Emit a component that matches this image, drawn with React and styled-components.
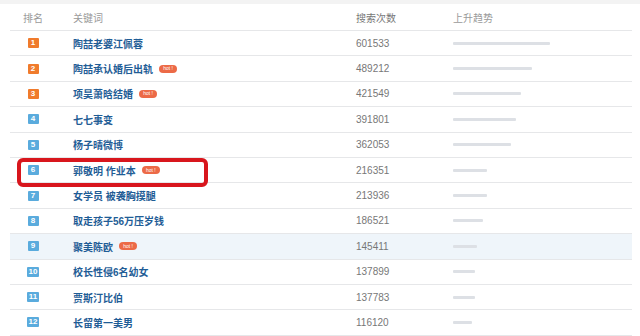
import * as React from 'react';
import styled, { createGlobalStyle } from 'styled-components';

const rows = [
  { rank: 1, word: '陶喆老婆江佩蓉', count: 601533, trend: 97 },
  { rank: 2, word: '陶喆承认婚后出轨', count: 489212, trend: 79, hot: true },
  { rank: 3, word: '项昊萧晗结婚', count: 421549, trend: 68, hot: true },
  { rank: 4, word: '七七事变', count: 391801, trend: 63 },
  { rank: 5, word: '杨子晴微博', count: 362053, trend: 58 },
  { rank: 6, word: '郭敬明 作业本', count: 216351, trend: 34, hot: true, marked: true },
  { rank: 7, word: '女学员 被袭胸摸腿', count: 213936, trend: 34 },
  { rank: 8, word: '取走孩子56万压岁钱', count: 186521, trend: 30 },
  { rank: 9, word: '聚美陈欧', count: 145411, trend: 24, hot: true, active: true },
  { rank: 10, word: '校长性侵6名幼女', count: 137899, trend: 22 },
  { rank: 11, word: '贾斯汀比伯', count: 137783, trend: 22 },
  { rank: 12, word: '长留第一美男', count: 116120, trend: 19 },
];

function App() {
  return (
    <>
      <GlobalStyle />
      <Page>
        <TopStrip />
        <Table>
          <HeadRow>
            <RankCell>排名</RankCell>
            <WordCell>关键词</WordCell>
            <CountCell>搜索次数</CountCell>
            <TrendCell>上升趋势</TrendCell>
          </HeadRow>
          {rows.map((item) => (
            <Row key={item.rank} $active={item.active}>
              <RankCell>
                <Rank $top={item.rank <= 3}>{item.rank}</Rank>
              </RankCell>
              <WordCell>
                <Keyword>{item.word}</Keyword>
                {item.hot && <Hot>hot !</Hot>}
              </WordCell>
              <CountCell>{item.count}</CountCell>
              <TrendCell>
                <Bar style={{ width: item.trend }} />
              </TrendCell>
              {item.marked && <Marker />}
            </Row>
          ))}
        </Table>
      </Page>
    </>
  );
}

const GlobalStyle = createGlobalStyle`
  html, body {
    margin: 0;
    padding: 0;
    background: #fff;
  }
  body {
    font-family: "Liberation Sans", "Noto Sans CJK SC", sans-serif;
  }
`;

const Page = styled.div`
  width: 640px;
  height: 336px;
  overflow: hidden;
  background: #fff;
`;

const TopStrip = styled.div`
  height: 4px;
  background: #f3f3f3;
`;

const Table = styled.div`
  margin: 0 8px 0 10px;
`;

const grid = `
  display: grid;
  grid-template-columns: 46px 300px 97px 1fr;
  align-items: center;
  box-sizing: border-box;
  border-bottom: 1px solid #e6e7e9;
`;

const HeadRow = styled.div`
  ${grid}
  height: 27px;
  padding-top: 1px;
  color: #9a9a9a;
  font-size: 10px;
`;

const Row = styled.div`
  ${grid}
  position: relative;
  height: 25.4px;
  background: ${(p) => (p.$active ? '#eff5fa' : '#fff')};
`;

const RankCell = styled.div`
  display: flex;
  justify-content: center;
`;

const WordCell = styled.div`
  display: flex;
  align-items: center;
  gap: 6px;
  padding-left: 17px;
`;

const CountCell = styled.div`
  font-size: 10px;
  color: #777;
`;

const TrendCell = styled.div`
  display: flex;
  align-items: center;
`;

const Rank = styled.span`
  display: inline-flex;
  align-items: center;
  justify-content: center;
  min-width: 11px;
  height: 10px;
  padding: 0 2px;
  box-sizing: border-box;
  border-radius: 1px;
  font-size: 8px;
  font-weight: bold;
  line-height: 1;
  color: #fff;
  background: ${(p) => (p.$top ? '#f07b2c' : '#5aabdd')};
`;

const Keyword = styled.span`
  font-size: 10px;
  font-weight: bold;
  color: #1f5d96;
`;

const Hot = styled.span`
  display: inline-flex;
  align-items: center;
  justify-content: center;
  width: 18px;
  height: 8px;
  border-radius: 4px;
  background: #ec6a47;
  color: #fff;
  font-size: 5px;
  line-height: 1;
`;

const Bar = styled.div`
  height: 3px;
  border-radius: 1px;
  background: #dde0e5;
`;

const Marker = styled.div`
  position: absolute;
  z-index: 2;
  left: 7px;
  top: 0;
  width: 191px;
  height: 29px;
  box-sizing: border-box;
  border: 4px solid #d8161d;
  border-radius: 6px;
  pointer-events: none;
`;

export default App;
